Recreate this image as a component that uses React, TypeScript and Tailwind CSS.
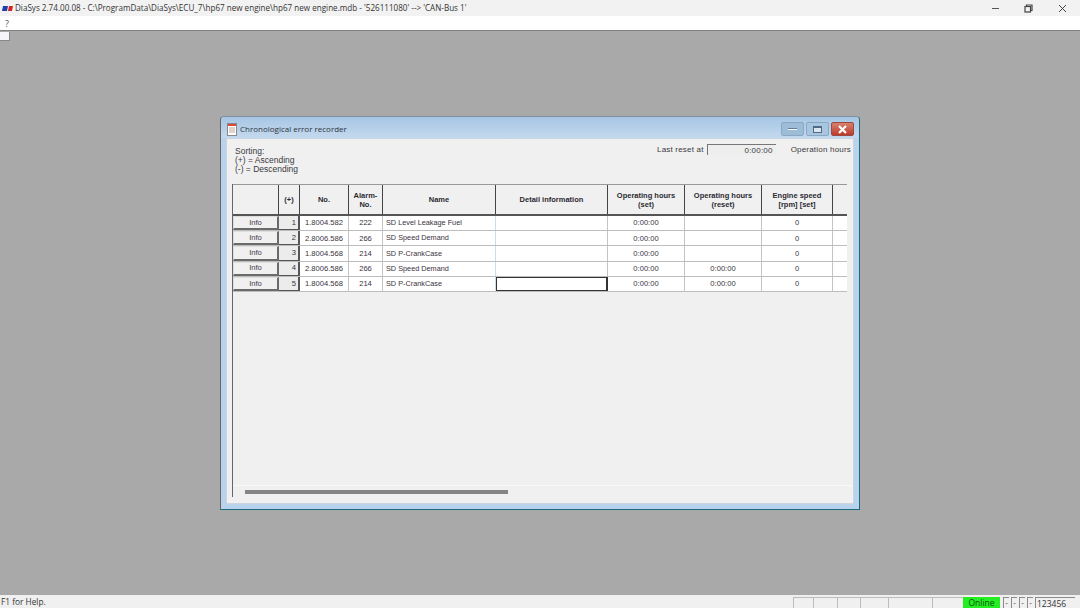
const tahoma = "font-['Liberation_Sans',Arial,sans-serif]"

const rows = [
  { n: 1, no: "1.8004.582", alarm: "222", name: "SD Level Leakage Fuel", set: "0:00:00", reset: "", rpm: "0" },
  { n: 2, no: "2.8006.586", alarm: "266", name: "SD Speed Demand", set: "0:00:00", reset: "", rpm: "0" },
  { n: 3, no: "1.8004.568", alarm: "214", name: "SD P-CrankCase", set: "0:00:00", reset: "", rpm: "0" },
  { n: 4, no: "2.8006.586", alarm: "266", name: "SD Speed Demand", set: "0:00:00", reset: "0:00:00", rpm: "0" },
  { n: 5, no: "1.8004.568", alarm: "214", name: "SD P-CrankCase", set: "0:00:00", reset: "0:00:00", rpm: "0" },
]

const headers = [
  { label: "", w: "w-[46px]" },
  { label: "(+)", w: "w-[21px]" },
  { label: "No.", w: "w-[49px]" },
  { label: "Alarm-\nNo.", w: "w-[34px]" },
  { label: "Name", w: "w-[113px]" },
  { label: "Detail information", w: "w-[112px]" },
  { label: "Operating hours\n(set)", w: "w-[77px]" },
  { label: "Operating hours\n(reset)", w: "w-[77px]" },
  { label: "Engine speed\n[rpm] [set]", w: "w-[71px]" },
  { label: "", w: "w-[14px]" },
]

const statusCells = ["w-[20px]", "w-[24px]", "w-[23px]", "w-[28px]", "w-[44px]", "w-[31px]"]

function TableRow({ row, last }: { row: (typeof rows)[number]; last: boolean }) {
  const cell = "h-full flex items-center justify-center border-r border-[#c4c4c4]"
  return (
    <div className="flex h-[15.2px] w-[614px] border-b border-[#bdbdbd] bg-white text-[7.6px] text-[#3a3340]">
      <div className="w-[46px] h-full bg-[#f0f0f0] flex items-center justify-center border border-[#6a6a6a] border-l-[#dddddd] border-t-[#dddddd] border-b-2 border-r-2 text-[#4a3a4a]">
        Info
      </div>
      <div className="w-[21px] h-full bg-[#ececec] flex items-center justify-end pr-[2px] border-r-2 border-b border-[#555555] text-[#333333]">
        {row.n}
      </div>
      <div className={`w-[49px] ${cell}`}>{row.no}</div>
      <div className={`w-[34px] ${cell}`}>{row.alarm}</div>
      <div className="w-[113px] h-full flex items-center pl-[3px] pt-px text-[7.3px] border-r border-[#c9dcf0]">{row.name}</div>
      <div className={`w-[112px] h-full ${last ? "border border-[#333333] border-r-2" : "border-r border-[#c4c4c4]"}`} />
      <div className={`w-[77px] ${cell}`}>{row.set}</div>
      <div className={`w-[77px] ${cell}`}>{row.reset}</div>
      <div className={`w-[71px] ${cell}`}>{row.rpm}</div>
      <div className="w-[14px] h-full" />
    </div>
  )
}

export default function App() {
  return (
    <div className={`w-[1080px] h-[608px] flex flex-col overflow-hidden bg-[#a9a9a9] ${tahoma}`}>
      {/* App title bar */}
      <div className="h-[16px] shrink-0 bg-[#f2f2f2] flex items-center pl-[2px] font-['Open_Sans',sans-serif] text-[8.1px] text-[#333333]">
        <svg width="11" height="7" viewBox="0 0 11 7" className="mr-[2px]">
          <path d="M1 1h5l-1 5H0z" fill="#1f3fa8" />
          <path d="M7 1h4l-1 5H6z" fill="#d8202a" />
        </svg>
        <span>DiaSys 2.74.00.08 - C:\ProgramData\DiaSys\ECU_7\hp67 new engine\hp67 new engine.mdb - '526111080' --&gt; 'CAN-Bus 1'</span>
        <div className="ml-auto flex items-center">
          <svg width="9" height="9" viewBox="0 0 9 9" className="mr-[24px]">
            <path d="M1 4.5h7" stroke="#555555" strokeWidth="1" />
          </svg>
          <svg width="9" height="9" viewBox="0 0 9 9" className="mr-[25px]" fill="none" stroke="#444444" strokeWidth="1.2">
            <path d="M2.5 2V1h5.5v5.5H7" />
            <rect x="1" y="2.5" width="5.5" height="5.5" />
          </svg>
          <svg width="9" height="9" viewBox="0 0 9 9" className="mr-[13px]">
            <path d="M1 1l7 7M8 1l-7 7" stroke="#444444" strokeWidth="1" />
          </svg>
        </div>
      </div>
      {/* Menu */}
      <div className="h-[14px] shrink-0 bg-white pl-[5px] text-[9px] leading-[15px] text-[#555555] font-['Open_Sans',sans-serif]">?</div>
      <div className="h-px shrink-0 bg-[#7f7f7f]" />

      {/* MDI area */}
      <div className="relative flex-1">
        <div className="absolute left-0 top-px w-[10px] h-[9px] bg-[#f4f4fa] border border-[#888888] border-l-0 border-t-0" />

        {/* Child window */}
        <div className="absolute left-[220px] top-[85px] w-[640px] h-[394px] flex flex-col rounded-t-[4px] border-b border-r border-[#1c6a80] border-l border-l-[#666666] border-t border-t-[#7f8f9f] bg-[#b9d3ec] px-[5px] pb-[5px]">
          <div className="h-[21px] shrink-0 -mx-[5px] px-[6px] pt-[3px] flex items-center rounded-t-[4px] bg-gradient-to-b from-[#a7c6e4] to-[#c4d9ee]">
            <svg width="10" height="13" viewBox="0 0 10 13" className="mr-[3px]">
              <rect x="0.5" y="0.5" width="9" height="12" fill="#ffffff" stroke="#888888" />
              <rect x="1" y="1" width="8" height="2" fill="#d84a3a" />
              <path d="M2 5h6M2 7h6M2 9h6" stroke="#b08a7a" strokeWidth="0.8" />
            </svg>
            <span className="text-[8px] text-[#2a3440] font-['Open_Sans',sans-serif]">Chronological error recorder</span>
            <div className="ml-auto flex items-center gap-[2px] mr-[-1px]">
              <div className="w-[23px] h-[14px] rounded-[2px] bg-[#9dbcd8] border border-[#8aa8c4] flex items-center justify-center">
                <div className="w-[9px] h-[2px] bg-[#5f7f9f] border-b border-white" />
              </div>
              <div className="w-[23px] h-[14px] rounded-[2px] bg-[#a9c6e0] border border-[#8aa8c4] flex items-center justify-center">
                <div className="w-[9px] h-[7px] border border-[#506a84] border-t-2 bg-[#d9e6f2]" />
              </div>
              <div className="w-[23px] h-[14px] rounded-[2px] bg-gradient-to-b from-[#d8806c] to-[#bb3a2c] border border-[#9a4a40] flex items-center justify-center">
                <svg width="11" height="9" viewBox="0 0 11 9">
                  <path d="M2 1l7 7M9 1l-7 7" stroke="#ffffff" strokeWidth="2.2" />
                </svg>
              </div>
            </div>
          </div>

          <div className="flex-1 min-h-0 flex flex-col bg-[#f0f0f0] border border-[#c9d6e2] text-[8.5px] text-[#3a3a40]">
            {/* Sorting legend + last reset */}
            <div className="h-[45px] shrink-0 flex justify-between pl-[8px] pr-[2px] pt-[5px]">
              <div className="pt-[3px] leading-[9px] text-[8.5px]">
                <div>Sorting:</div>
                <div>(+) = Ascending</div>
                <div>(-) = Descending</div>
              </div>
              <div className="flex items-center h-[11px] text-[8px] tracking-[0.2px]">
                <span className="mr-[3px]">Last reset at</span>
                <div className="w-[69px] h-[11px] border-t border-l border-[#777777] bg-[#eeeeee] text-right pr-[3px] leading-[11px]">0:00:00</div>
                <span className="ml-[15px]">Operation hours</span>
              </div>
            </div>

            {/* Grid */}
            <div className="ml-[5px] mr-[1px] h-[313px] shrink-0 flex flex-col border-l border-[#666666]">
              <div className="flex h-[32px] w-[614px] shrink-0 border-t border-[#999999] border-b-2 border-b-[#555555] bg-[#f0f0f0] text-[7.5px] font-bold leading-[9px] text-[#2a2a30]">
                {headers.map((h, i) => (
                  <div
                    key={i}
                    className={`${h.w} h-full flex items-center justify-center text-center whitespace-pre-line ${i < headers.length - 1 ? "border-r border-[#444444]" : ""}`}
                  >
                    {h.label}
                  </div>
                ))}
              </div>
              {rows.map((row, i) => (
                <TableRow key={row.n} row={row} last={i === rows.length - 1} />
              ))}
              <div className="flex-1" />
              {/* Horizontal scroll bar */}
              <div className="h-[12px] shrink-0 border-t border-[#f8f8f8] pl-[12px] pt-[4px]">
                <div className="w-[263px] h-[4px] bg-[#858585]" />
              </div>
            </div>
          </div>
        </div>
      </div>

      {/* Status bar */}
      <div className="h-[13px] shrink-0 bg-[#f0f0f0] flex items-center font-['Open_Sans',sans-serif] text-[8.3px] text-[#333333]">
        <span className="pl-px pt-[2px]">F1 for Help.</span>
        <div className="ml-auto flex h-[11px] mt-[2px] items-stretch pr-[5px]">
          {statusCells.map((w, i) => (
            <div key={i} className={`${w} border-t border-l border-[#bcbcbc]`} />
          ))}
          <div className="w-[37px] bg-[#22ee22] text-center text-[8.5px] leading-[12px] text-[#0f4f0f]">Online</div>
          <div className="ml-[3px] flex gap-[2px] items-stretch">
            {["-", "-", "-", "-"].map((d, i) => (
              <div key={i} className="w-[6px] border-t border-l border-[#8a8a8a] text-center text-[8px] leading-[8px]">{d}</div>
            ))}
            <div className="w-[40px] border-t border-l border-[#8a8a8a] pl-[1px] text-[8.5px] leading-[11px]">123456</div>
          </div>
        </div>
      </div>
    </div>
  )
}
